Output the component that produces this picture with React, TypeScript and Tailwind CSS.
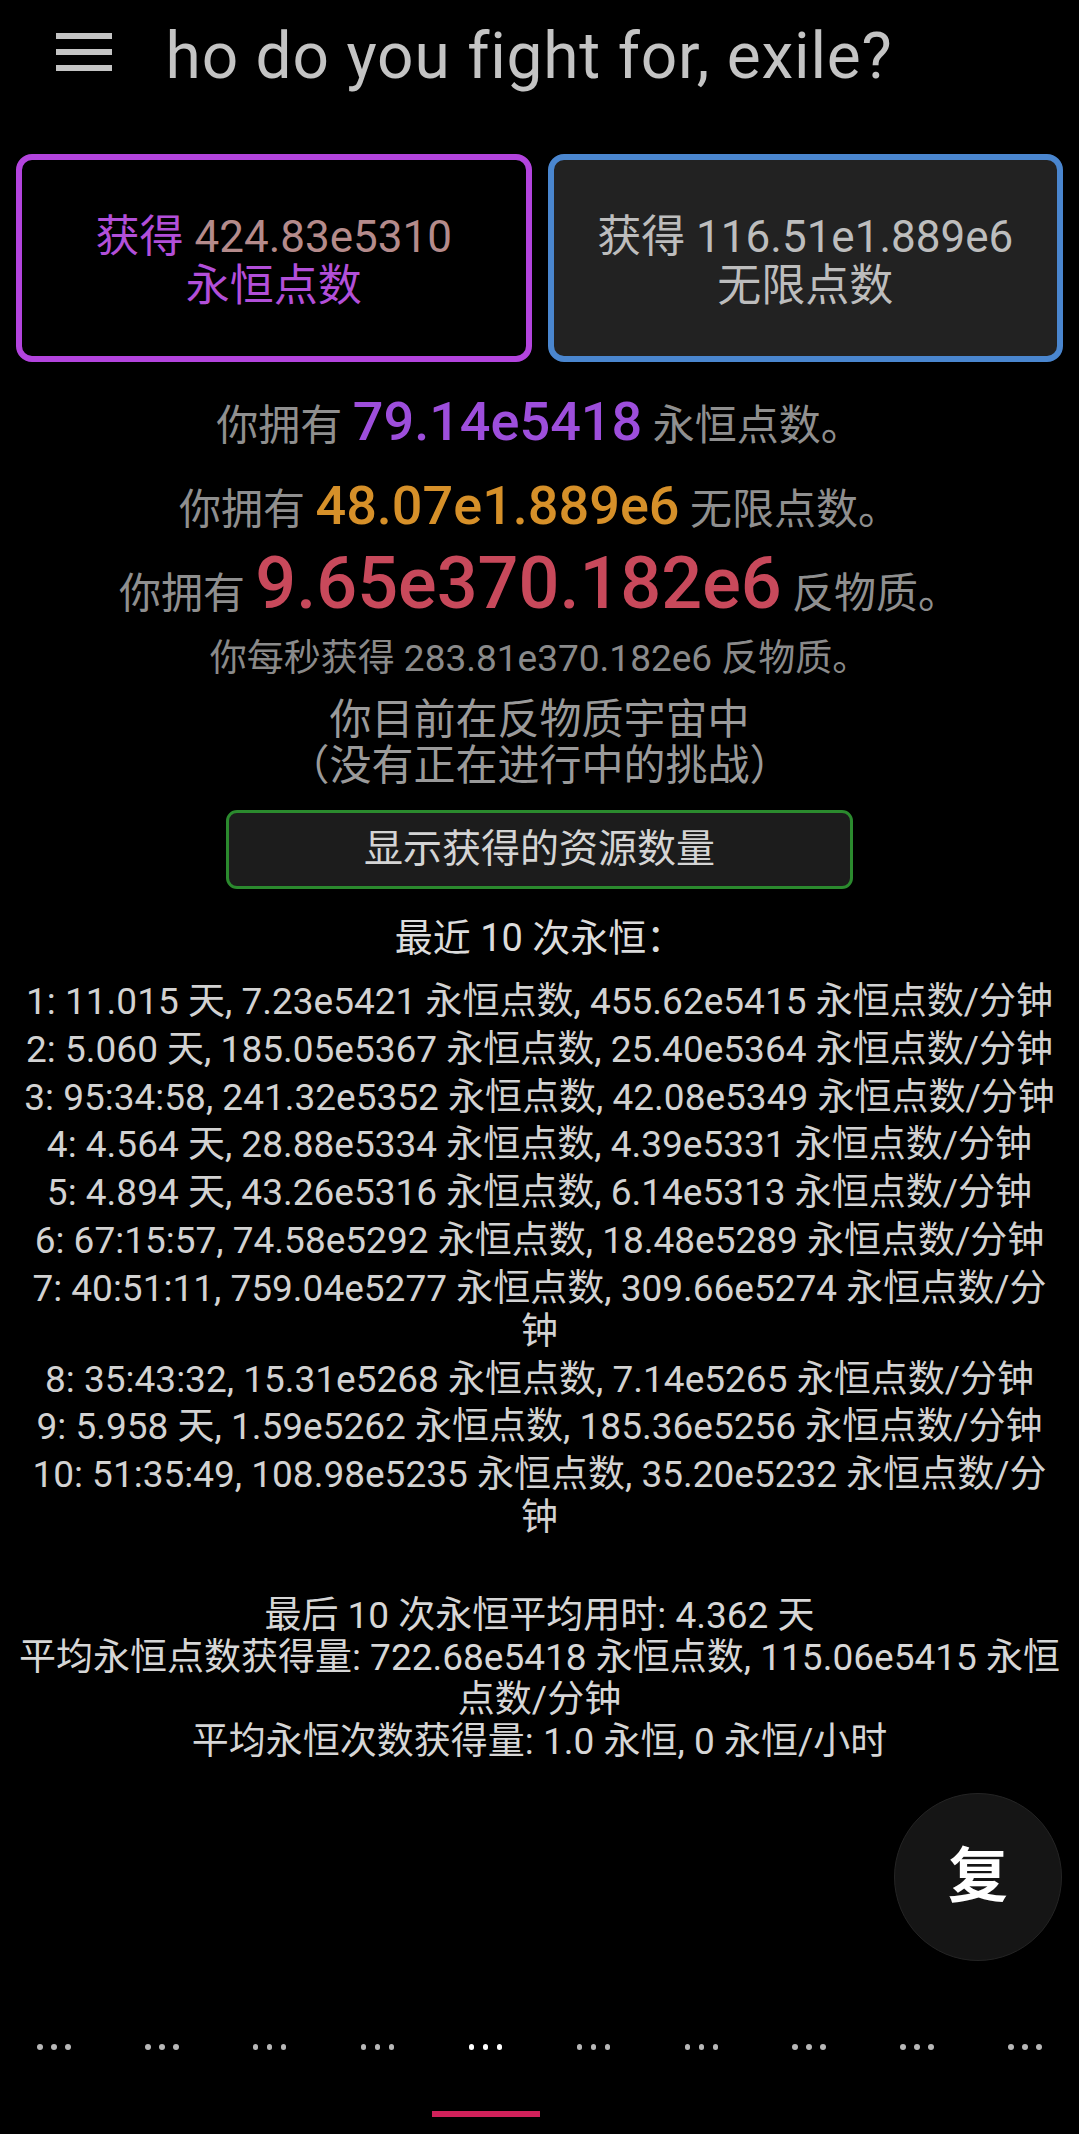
import React from 'react';

const recent = [
  '1: 11.015 天, 7.23e5421 永恒点数, 455.62e5415 永恒点数/分钟',
  '2: 5.060 天, 185.05e5367 永恒点数, 25.40e5364 永恒点数/分钟',
  '3: 95:34:58, 241.32e5352 永恒点数, 42.08e5349 永恒点数/分钟',
  '4: 4.564 天, 28.88e5334 永恒点数, 4.39e5331 永恒点数/分钟',
  '5: 4.894 天, 43.26e5316 永恒点数, 6.14e5313 永恒点数/分钟',
  '6: 67:15:57, 74.58e5292 永恒点数, 18.48e5289 永恒点数/分钟',
  '7: 40:51:11, 759.04e5277 永恒点数, 309.66e5274 永恒点数/分钟',
  '8: 35:43:32, 15.31e5268 永恒点数, 7.14e5265 永恒点数/分钟',
  '9: 5.958 天, 1.59e5262 永恒点数, 185.36e5256 永恒点数/分钟',
  '10: 51:35:49, 108.98e5235 永恒点数, 35.20e5232 永恒点数/分钟',
];

const tabs = Array.from({ length: 10 }, (_, i) => i);

export default function App() {
  return (
    <div className="relative flex h-[2134px] flex-col overflow-hidden bg-black font-['Roboto','Noto_Sans_CJK_SC',sans-serif] text-[#d2d2d2]">
      {/* Header */}
      <header className="flex h-[154px] shrink-0 items-start">
        <div className="ml-[56px] mt-[33px] flex w-[56px] flex-col gap-[10px]">
          <span className="h-[6px] bg-[#c4c4c4]" />
          <span className="h-[6px] bg-[#c4c4c4]" />
          <span className="h-[6px] bg-[#c4c4c4]" />
        </div>
        <div className="ml-[52px] mt-[21px] flex-1 overflow-hidden whitespace-nowrap text-[64px] leading-[72px] tracking-[0.8px] text-[#c4c4c4]">
          <span className="-ml-[56px] inline-block">Who do you fight for, exile?</span>
        </div>
      </header>

      {/* Prestige buttons */}
      <div className="grid shrink-0 grid-cols-2 gap-[16px] px-[16px]">
        <div className="flex h-[208px] flex-col items-center justify-center rounded-[16px] border-[6px] border-[#b344de] bg-black pt-[8px] text-[44px] leading-[49px] text-[#b24fd9]">
          <p>
            获得 <span className="text-[#b58b8b]">424.83e5310</span>
          </p>
          <p>永恒点数</p>
        </div>
        <div className="flex h-[208px] flex-col items-center justify-center rounded-[16px] border-[6px] border-[#4a86cf] bg-[#222222] pt-[8px] text-[44px] leading-[49px] text-[#bdbdbd]">
          <p>获得 116.51e1.889e6</p>
          <p>无限点数</p>
        </div>
      </div>

      {/* Resources */}
      <p className="mt-[26px] text-center text-[42px] leading-[76px] text-[#8f8f8f]">
        你拥有 <span className="text-[54px] font-medium leading-none text-[#9d4edb]">79.14e5418</span> 永恒点数。
      </p>
      <p className="mt-[8px] text-center text-[42px] leading-[76px] text-[#8f8f8f]">
        你拥有 <span className="text-[54px] font-medium leading-none text-[#d69029]">48.07e1.889e6</span> 无限点数。
      </p>
      <p className="text-center text-[42px] leading-[84px] text-[#8f8f8f]">
        你拥有 <span className="text-[72px] font-medium leading-none text-[#c8495b]">9.65e370.182e6</span> 反物质。
      </p>
      <p className="mt-[1px] text-center text-[37px] leading-[44px] text-[#8a8a8a]">你每秒获得 283.81e370.182e6 反物质。</p>

      <div className="mt-[16px] text-center text-[42px] leading-[46px] text-[#9a9a9a]">
        <p>你目前在反物质宇宙中</p>
        <p>（没有正在进行中的挑战）</p>
      </div>

      <div className="mt-[21px] flex justify-center">
        <button className="flex h-[79px] w-[627px] items-center justify-center rounded-[11px] border-[3px] border-[#2b8a2e] bg-[#1c1c1c] text-[39px] text-[#d4d4d4]">
          显示获得的资源数量
        </button>
      </div>

      {/* Recent eternities */}
      <p className="mt-[27px] text-center text-[38px] leading-[44px] text-[#dcdcdc]">最近 10 次永恒：</p>
      <div className="mt-[20px] flex flex-col gap-[4.8px] px-[17px] text-center text-[37px] leading-[43px] text-[#d2d2d2]">
        {recent.map((line) => (
          <p key={line}>{line}</p>
        ))}
      </div>

      <div className="mt-[56px] px-[17px] text-center text-[37px] leading-[42px] text-[#d6d6d6]">
        <p>最后 10 次永恒平均用时: 4.362 天</p>
        <p>平均永恒点数获得量: 722.68e5418 永恒点数, 115.06e5415 永恒点数/分钟</p>
        <p>平均永恒次数获得量: 1.0 永恒, 0 永恒/小时</p>
      </div>

      {/* Floating reset button */}
      <button className="absolute right-[17px] top-[1793px] flex h-[168px] w-[168px] items-center justify-center rounded-full border border-[#242424] bg-[#151515] text-[60px] font-bold text-white">
        复
      </button>

      {/* Bottom tabs */}
      <nav className="mt-auto grid shrink-0 grid-cols-10">
        {tabs.map((i) => (
          <div key={i} className="flex h-[134px] flex-col items-center">
            <div className="flex h-[94px] items-center gap-[8.5px]">
              <span className={i === 4 ? 'h-[5.5px] w-[5.5px] rounded-full bg-white' : 'h-[5.5px] w-[5.5px] rounded-full bg-[#b8b8b8]'} />
              <span className={i === 4 ? 'h-[5.5px] w-[5.5px] rounded-full bg-white' : 'h-[5.5px] w-[5.5px] rounded-full bg-[#b8b8b8]'} />
              <span className={i === 4 ? 'h-[5.5px] w-[5.5px] rounded-full bg-white' : 'h-[5.5px] w-[5.5px] rounded-full bg-[#b8b8b8]'} />
            </div>
            <div className={i === 4 ? 'mt-[17px] h-[6px] w-full bg-[#d0215a]' : 'mt-[17px] h-[6px] w-full'} />
          </div>
        ))}
      </nav>
    </div>
  );
}
